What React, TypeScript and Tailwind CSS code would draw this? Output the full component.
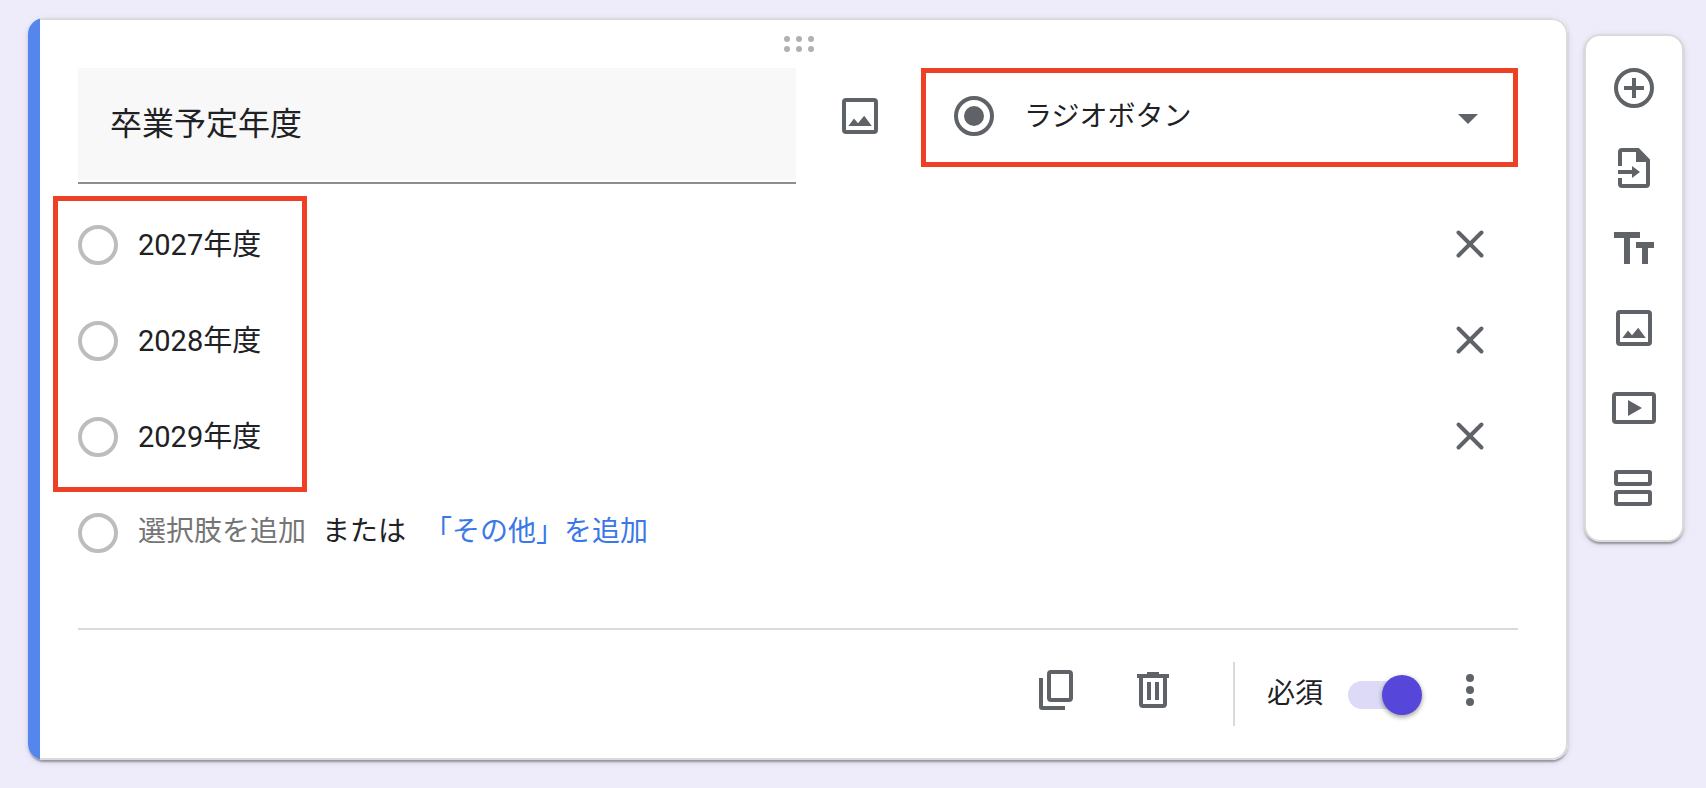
import type { ReactNode } from "react";

function Icon({ children }: { children: ReactNode }) {
  return (
    <svg viewBox="0 0 48 48" className="block size-12 shrink-0" fill="currentColor" aria-hidden="true">
      {children}
    </svg>
  );
}

function ImageIcon() {
  return (
    <Icon>
      <rect x="8" y="8" width="32" height="32" rx="2" fill="none" stroke="currentColor" strokeWidth="4" />
      <path d="M12.4 34l5.6-7.6 4 4.8 6.2-7.4L35.8 34z" />
    </Icon>
  );
}

function CloseIcon() {
  return (
    <Icon>
      <path d="M12.5 12.5l23 23M35.5 12.5l-23 23" fill="none" stroke="currentColor" strokeWidth="4" strokeLinecap="round" />
    </Icon>
  );
}

const tools = [
  {
    label: "質問を追加",
    icon: (
      <Icon>
        <circle cx="24" cy="24" r="18" fill="none" stroke="currentColor" strokeWidth="4" />
        <path d="M22 14h4v8h8v4h-8v8h-4v-8h-8v-4h8z" />
      </Icon>
    ),
  },
  {
    label: "質問をインポート",
    icon: (
      <Icon>
        <path d="M8 22V8a4 4 0 0 1 4-4h16.8L40 15.6V40a4 4 0 0 1-4 4H12a4 4 0 0 1-4-4v-6h4v6h24V18H26V8H12v14z" />
        <path d="M8 26h14v-4l8 6-8 6v-4H8z" />
      </Icon>
    ),
  },
  {
    label: "タイトルと説明を追加",
    icon: (
      <Icon>
        <path d="M4 8h26v6H20v26h-6V14H4zM26 18h18v6h-6v16h-6V24h-6z" />
      </Icon>
    ),
  },
  { label: "画像を追加", icon: <ImageIcon /> },
  {
    label: "動画を追加",
    icon: (
      <Icon>
        <rect x="4" y="10" width="40" height="28" rx="2" fill="none" stroke="currentColor" strokeWidth="4" />
        <path d="M18 16l14 8-14 8z" />
      </Icon>
    ),
  },
  {
    label: "セクションを追加",
    icon: (
      <Icon>
        <g fill="none" stroke="currentColor" strokeWidth="4">
          <rect x="6" y="8" width="34" height="12" rx="1" />
          <rect x="6" y="28" width="34" height="12" rx="1" />
        </g>
      </Icon>
    ),
  },
];

const options = ["2027年度", "2028年度", "2029年度"];

function RadioMark() {
  return (
    <input
      type="radio"
      disabled
      aria-label="選択肢"
      className="mt-0.5 size-10 shrink-0 appearance-none rounded-full border-4 border-[#bdbdbd]"
    />
  );
}

export default function App() {
  return (
    <main className="flex min-h-screen items-start gap-4 bg-[#eeecfb] pt-[18px] pr-[22px] pb-7 pl-7 font-['Roboto','Noto_Sans_CJK_JP',sans-serif] text-[28px] leading-10 text-[#202124]">
      <section className="flex min-w-0 flex-1 overflow-hidden rounded-2xl bg-white shadow-[0_4px_2px_-2px_rgba(0,0,0,0.2),0_2px_2px_rgba(0,0,0,0.14),0_2px_6px_rgba(0,0,0,0.12)]">
        <div className="w-3 shrink-0 bg-[#5586ee]" />
        <div className="min-w-0 flex-1 rounded-r-2xl border-y-2 border-r-2 border-[#dadada] pt-4 pr-12 pl-[38px]">
          <svg viewBox="-2 0 32 16" className="mx-auto block h-4 w-8 text-[#b1b1b1]" fill="currentColor" aria-hidden="true">
            <circle cx="3" cy="3" r="3" />
            <circle cx="15" cy="3" r="3" />
            <circle cx="27" cy="3" r="3" />
            <circle cx="3" cy="13" r="3" />
            <circle cx="15" cy="13" r="3" />
            <circle cx="27" cy="13" r="3" />
          </svg>

          <div className="mt-4 flex items-start">
            <div className="min-w-0 flex-[718] border-b-2 border-[#8e8e8e] pb-0.5">
              <input
                type="text"
                aria-label="質問"
                defaultValue="卒業予定年度"
                className="block h-28 w-full bg-[#f8f8f8] px-8 pb-1.5 text-[32px] outline-none"
              />
            </div>
            <button type="button" aria-label="画像を追加" className="mt-6 mr-[37px] ml-10 text-[#5f6368]">
              <ImageIcon />
            </button>
            <div className="min-w-0 flex-[597]">
              <div className="flex items-center border-[5px] border-[#ee4025] pt-[19px] pr-[21px] pb-[22px] pl-6 text-[#5f6368]">
                <Icon>
                  <circle cx="24" cy="24" r="18" fill="none" stroke="currentColor" strokeWidth="4" />
                  <circle cx="24" cy="24" r="10" />
                </Icon>
                <select aria-label="質問の形式" className="ml-[26px] min-w-0 flex-1 appearance-none bg-transparent pt-0.5 text-[#202124] outline-none">
                  <option>ラジオボタン</option>
                </select>
                <Icon>
                  <path d="M14 22h20L24 32z" />
                </Icon>
              </div>
            </div>
          </div>

          <div className="relative mt-5">
            <div className="pointer-events-none absolute -top-2 -left-[25px] h-[296px] w-[254px] border-[5px] border-[#ee4025]" />
            <ul className="flex flex-col gap-4">
              {options.map((option) => (
                <li key={option} className="flex h-20 items-center gap-5">
                  <RadioMark />
                  <input
                    type="text"
                    aria-label="選択肢の値"
                    defaultValue={option}
                    className="min-w-0 flex-1 bg-transparent pt-0.5 text-[29px] outline-none"
                  />
                  <button type="button" aria-label={`${option}を削除`} className="mr-6 text-[#5f6368]">
                    <CloseIcon />
                  </button>
                </li>
              ))}
              <li className="flex h-20 items-center">
                <RadioMark />
                <div className="ml-5 flex gap-4">
                  <button type="button" className="text-[#757575]">選択肢を追加</button>
                  <span>または</span>
                  <button type="button" className="ml-0.5 text-[#3b78e7]">「その他」を追加</button>
                </div>
              </li>
            </ul>
          </div>

          <footer className="mt-14 flex items-start justify-end border-t-2 border-[#dadada] pt-8 pr-6 pb-8">
            <div className="flex h-14 items-center gap-[49px] text-[#5f6368]">
              <button type="button" aria-label="コピーを作成">
                <Icon>
                  <rect x="17" y="6" width="22" height="28" rx="2" fill="none" stroke="currentColor" strokeWidth="4" />
                  <path d="M7 12h4v28h22v4H10a3 3 0 0 1-3-3z" />
                </Icon>
              </button>
              <button type="button" aria-label="削除">
                <Icon>
                  <path d="M18 6h12v2h10v4h-2v26a4 4 0 0 1-4 4H14a4 4 0 0 1-4-4V12H8V8h10zM14 12v26h20V12z" fillRule="evenodd" />
                  <path d="M18 16h4v18h-4zM26 16h4v18h-4z" />
                </Icon>
              </button>
            </div>
            <div className="mr-8 ml-14 h-16 w-0.5 bg-[#dadada]" />
            <label className="flex h-16 items-center gap-[25px] pt-0.5">
              <span className="pb-0.5">必須</span>
              <span className="relative flex h-10 w-[74px] items-center">
                <input type="checkbox" role="switch" defaultChecked className="peer h-7 w-[72px] appearance-none rounded-full bg-[#dddaf7]" />
                <span className="absolute top-0 left-0 size-10 rounded-full bg-[#5646da] shadow-[0_2px_5px_rgba(0,0,0,0.4)] peer-checked:right-0 peer-checked:left-auto" />
              </span>
            </label>
            <button type="button" aria-label="その他のオプション" className="mt-1 ml-6 text-[#5f6368]">
              <Icon>
                <circle cx="24" cy="12" r="4" />
                <circle cx="24" cy="24" r="4" />
                <circle cx="24" cy="36" r="4" />
              </Icon>
            </button>
          </footer>
        </div>
      </section>

      <aside className="mt-4 flex w-[100px] shrink-0 flex-col items-center gap-8 rounded-2xl border-2 border-[#dadada] bg-white pt-7 pb-7 text-[#5f6368] shadow-[0_4px_2px_-2px_rgba(0,0,0,0.2),0_2px_2px_rgba(0,0,0,0.14),0_2px_6px_rgba(0,0,0,0.12)]">
        {tools.map((tool) => (
          <button key={tool.label} type="button" aria-label={tool.label}>
            {tool.icon}
          </button>
        ))}
      </aside>
    </main>
  );
}
